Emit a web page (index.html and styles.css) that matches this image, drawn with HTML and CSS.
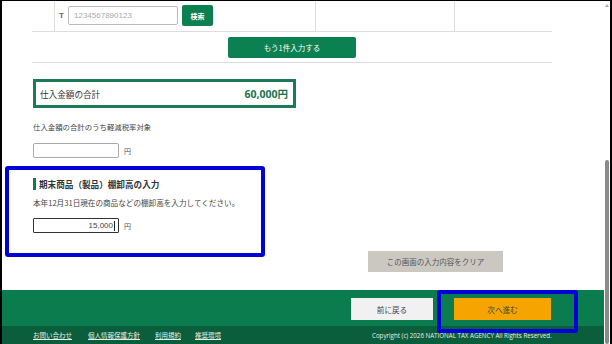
FILE: index.html
```html
<!DOCTYPE html>
<html lang="ja">
<head>
<meta charset="utf-8">
<link rel="stylesheet" href="styles.css">
</head>
<body>
<div class="frame">
  <div class="page">
    <div class="main">
      <div class="tablerow">
        <div class="cell"></div>
        <div class="cell cell-t">
          <span class="t">T</span>
          <span class="tinput">1234567890123</span>
          <span class="search">検索</span>
        </div>
        <div class="cell"></div>
        <div class="cell"></div>
      </div>
      <div class="addrow">
        <span class="addbtn">もう1件入力する</span>
      </div>
      <div class="total">
        <span class="total-label">仕入金額の合計</span>
        <span class="total-amount">60,000円</span>
      </div>
      <div class="label">仕入金額の合計のうち軽減税率対象</div>
      <div class="inrow">
        <span class="yeninput"></span>
        <span class="yen">円</span>
      </div>
      <div class="sec-title"><span class="bar"></span>期末商品（製品）棚卸高の入力</div>
      <div class="sec-text">本年12月31日現在の商品などの棚卸高を入力してください。</div>
      <div class="inrow inrow2">
        <span class="yeninput focused">15,000<span class="caret"></span></span>
        <span class="yen">円</span>
      </div>
      <div class="clearrow"><span class="clearbtn">この画面の入力内容をクリア</span></div>
    </div>
    <div class="footer">
      <div class="navbtns">
        <span class="backbtn">前に戻る</span>
        <span class="nextbtn">次へ進む</span>
      </div>
      <div class="subfooter">
        <div class="links">
          <a>お問い合わせ</a>
          <a>個人情報保護方針</a>
          <a>利用規約</a>
          <a>推奨環境</a>
        </div>
        <div class="copy">Copyright (c) 2026 NATIONAL TAX AGENCY All Rights Reserved.</div>
      </div>
    </div>
  </div>
  <div class="scrollbar">
    <span class="arrow"></span>
    <span class="thumb"></span>
  </div>
  <div class="hl hl1"></div>
  <div class="hl hl2"></div>
</div>
</body>
</html>
```
FILE: styles.css
```css
* { box-sizing: border-box; }
html, body { margin: 0; padding: 0; overflow: hidden; }
body {
  width: 612px; height: 344px;
  font-family: "Noto Sans CJK JP", "Noto Sans", sans-serif;
  color: #333;
  background: #fff;
}
.frame {
  position: relative;
  width: 612px; height: 344px;
  border-top: 1px solid #000;
  border-left: 2px solid #000;
  border-right: 2px solid #000;
  display: flex;
  overflow: hidden;
}
.page { flex: 1; display: flex; flex-direction: column; min-width: 0; }
.main { padding: 0 0 18px 30px; }

.tablerow {
  width: 520px; height: 31px;
  display: grid;
  grid-template-columns: 22px 261px 139px 98px;
  border-bottom: 1px solid #ddd;
}
.cell + .cell { border-left: 1px solid #ddd; }
.cell-t { display: flex; align-items: center; padding-left: 4px; padding-bottom: 1px; }
.t { font-family: "Liberation Sans", sans-serif; font-weight: bold; font-size: 8px; color: #666; width: 9px; }
.tinput {
  width: 110px; height: 19px;
  border: 1px solid #bbb; border-radius: 2px;
  font-family: "Liberation Sans", sans-serif;
  font-size: 8px; color: #aaa;
  display: flex; align-items: center; padding-left: 5px;
}
.search {
  margin-left: 4px;
  width: 31px; height: 21px;
  background: #0b8050; color: #fff;
  font-size: 7px; font-weight: bold;
  border-radius: 2px;
  display: flex; align-items: center; justify-content: center;
}
.addrow {
  width: 520px;
  padding: 5px 0 4px;
  border-bottom: 1px solid #ddd;
  display: flex; justify-content: center;
}
.addbtn {
  width: 128px; height: 21px;
  background: #0b8050; color: #fff;
  font-size: 7.5px; border-radius: 2px;
  display: flex; align-items: center; justify-content: center;
}
.total {
  margin: 16px 0 0 1px;
  width: 263px; height: 29px;
  border: 3px solid #1c7a55;
  display: flex; align-items: center; justify-content: space-between;
  padding: 0 5px 0 4px;
}
.total-label { font-size: 8.6px; color: #333; }
.total-amount { font-size: 10.5px; font-weight: bold; color: #17744f; font-family: "Open Sans", "Noto Sans CJK JP", sans-serif; }
.label { margin: 13px 0 0 1px; font-size: 7.4px; line-height: 12px; color: #444; }
.inrow { margin: 10px 0 0 1px; display: flex; align-items: center; height: 15px; }
.yeninput {
  width: 86px; height: 15px;
  border: 1px solid #aaa; border-radius: 2px;
}
.yeninput.focused {
  border: 1.5px solid #333; border-radius: 1px;
  display: flex; align-items: center; justify-content: flex-end;
  font-family: "Liberation Sans", sans-serif; font-size: 8px; color: #444;
  padding-right: 3px;
}
.caret { width: 1px; height: 10px; background: #222; margin-left: 1px; }
.yen { margin-left: 5px; font-size: 7px; color: #555; }
.sec-title {
  margin: 20px 0 0 1px;
  display: flex; align-items: center;
  font-size: 8.6px; font-weight: bold; color: #333; line-height: 12px;
}
.bar { width: 3px; height: 12px; background: #127a4c; margin-right: 3px; }
.sec-text { margin: 7px 0 0 1px; font-size: 7.6px; line-height: 12px; color: #444; }
.inrow2 { margin-top: 9px; }
.clearrow { margin-top: 18px; padding-left: 336px; display: flex; }
.clearbtn {
  width: 135px; height: 21px;
  background: #cbc8c2; color: #555;
  font-size: 7.5px;
  display: flex; align-items: center; justify-content: center;
}
.footer { background: #0b7c4e; flex: 1; display: flex; flex-direction: column; }
.navbtns { padding: 8px 0 6px 349px; display: flex; gap: 21px; }
.backbtn, .nextbtn {
  height: 22px;
  display: flex; align-items: center; justify-content: center;
  font-size: 7.6px;
}
.backbtn { width: 82px; background: #f1f1f1; color: #444; }
.nextbtn { width: 97px; background: #f6a500; color: #444; }
.subfooter {
  flex: 1;
  background: #0a5e3b;
  display: flex; align-items: center;
  padding-left: 31px;
}
.links { display: flex; gap: 0; width: 339px; }
.links a { font-size: 6.5px; color: #e8efe9; text-decoration: underline; margin-right: 16px; }
.links a:nth-child(2) { margin-right: 15px; }
.links a:nth-child(3) { margin-right: 14px; }
.copy { font-family: "Open Sans", sans-serif; font-size: 6.2px; color: #e8efe9; white-space: nowrap; }
.scrollbar { width: 6px; position: relative; background: #fff; }
.arrow {
  position: absolute; left: 1px; top: 3px;
  width: 0; height: 0;
  border-left: 2px solid transparent; border-right: 2px solid transparent;
  border-bottom: 3px solid #aaa;
}
.thumb {
  position: absolute; left: 1px; top: 159px; bottom: 0;
  width: 4px; background: #8c8a88; border-radius: 2px;
}
.hl { position: absolute; border: 4px solid #0000d8; border-radius: 3px; pointer-events: none; }
.hl1 { left: 3px; top: 165px; width: 260px; height: 91px; }
.hl2 { left: 435px; top: 289px; width: 141px; height: 43px; }
```
